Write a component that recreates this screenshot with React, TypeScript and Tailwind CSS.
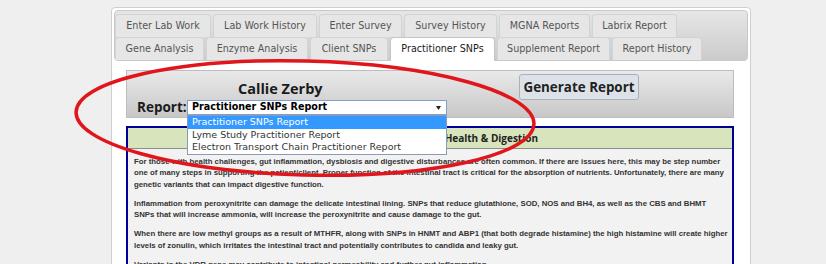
import React from 'react';

// Tab rows of the report page (widths taken from the jQuery UI layout)
const topTabs = [
  { label: 'Enter Lab Work', w: 'w-[96px]' },
  { label: 'Lab Work History', w: 'w-[104px]' },
  { label: 'Enter Survey', w: 'w-[83px]' },
  { label: 'Survey History', w: 'w-[93px]' },
  { label: 'MGNA Reports', w: 'w-[91px]' },
  { label: 'Labrix Report', w: 'w-[85px]' },
];

const bottomTabs = [
  { label: 'Gene Analysis', w: 'w-[89px]', active: false },
  { label: 'Enzyme Analysis', w: 'w-[102px]', active: false },
  { label: 'Client SNPs', w: 'w-[78px]', active: false },
  { label: 'Practitioner SNPs', w: 'w-[105px]', active: true },
  { label: 'Supplement Report', w: 'w-[113px]', active: false },
  { label: 'Report History', w: 'w-[90px]', active: false },
];

const reportOptions = [
  'Practitioner SNPs Report',
  'Lyme Study Practitioner Report',
  'Electron Transport Chain Practitioner Report',
];

function Tab({ label, w, active }: { label: string; w: string; active?: boolean }) {
  return (
    <div
      className={
        active
          ? `${w} relative z-10 flex h-[24px] items-center justify-center rounded-t-[4px] border border-b-0 border-[#c5c5c5] bg-white text-[#212121]`
          : `${w} flex h-[23px] items-center justify-center rounded-t-[4px] border border-b-0 border-[#d3d3d3] bg-[#e6e6e6] text-[#555]`
      }
    >
      {label}
    </div>
  );
}

export default function App() {
  return (
    <div className="relative h-[264px] overflow-hidden bg-[#efefef] pl-[111px] pt-[7px] font-['DejaVu_Sans',sans-serif]">
      {/* Main panel */}
      <div className="h-[400px] w-[640px] rounded-[4px] border border-[#cfcfcf] bg-white p-[2px]">
        {/* Tabs header */}
        <div className="rounded-[4px] border border-[#c9c9c9] bg-linear-to-b from-[#e6e6e6] to-[#cbcbcb] pt-[3px] text-[9.6px]">
          <div className="flex gap-[2px]">
            {topTabs.map(t => (
              <Tab key={t.label} label={t.label} w={t.w} />
            ))}
          </div>
          <div className="flex h-[23px] items-start gap-[2px]">
            {bottomTabs.map(t => (
              <Tab key={t.label} label={t.label} w={t.w} active={t.active} />
            ))}
          </div>
        </div>

        <div className="pl-[12px] pt-[9px]">
          {/* Report chooser */}
          <div className="flex h-[48px] w-[608px] border border-[#bdbdbd] bg-linear-to-b from-[#e9e9e9] to-[#c8c8c8]">
            <div className="flex flex-col pl-[10px]">
              <div className="pl-[101px] pt-[8px] font-['Open_Sans',sans-serif] text-[14.5px] font-bold leading-[20px] text-[#1a1a1a]">
                Callie Zerby
              </div>
              <div className="mt-[1px] flex h-[15px] items-center">
                <span className="w-[50px] font-['Open_Sans',sans-serif] text-[13.5px] font-bold leading-[15px] text-[#1a1a1a]">
                  Report:
                </span>
                <div className="relative h-[15px] w-[260px]">
                  <div className="flex h-[15px] items-center justify-between border border-[#7f9fd0] bg-white pl-[4px] pr-[5px] text-[9.6px] font-bold text-black">
                    <span>Practitioner SNPs Report</span>
                    <svg width="5" height="4" viewBox="0 0 5 4">
                      <path d="M0 0 L5 0 L2.5 4 Z" fill="#222" />
                    </svg>
                  </div>
                  {/* open dropdown list */}
                  <div className="absolute left-0 top-[15px] z-20 w-[260px] border border-[#8a9bb5] bg-white text-[9.5px] text-[#333]">
                    {reportOptions.map((o, i) => (
                      <div
                        key={o}
                        className={
                          i === 0
                            ? 'flex h-[12.5px] items-center bg-[#3399ff] pl-[4px] text-white'
                            : 'flex h-[12.5px] items-center pl-[4px]'
                        }
                      >
                        {o}
                      </div>
                    ))}
                  </div>
                </div>
              </div>
            </div>
            <div className="ml-[72px] pt-[3px]">
              <button className="h-[26px] w-[120px] rounded-[3px] border border-[#a8b0ba] bg-[#dde2e8] font-['Open_Sans',sans-serif] text-[13.4px] font-bold text-[#222]">
                Generate Report
              </button>
            </div>
          </div>

          {/* Report section */}
          <div className="mt-[8px] w-[608px] border-2 border-[#000099] bg-[#f2f2f2]">
            <div className="flex h-[21px] items-center justify-center border-b border-[#8c8c8c] bg-[#d8e4bc] font-['Open_Sans',sans-serif] text-[10px] font-bold text-[#222]">
              Gastrointestinal System Health &amp; Digestion
            </div>
            <div className="px-[6px] pt-[7px] font-['Liberation_Sans',Arial,sans-serif] text-[7.8px] font-bold leading-[11.3px] text-[#333]">
              <p className="mb-[8px] whitespace-nowrap">
                For those with health challenges, gut inflammation, dysbiosis and digestive disturbances are often common. If there are issues here, this may be step number
                <br />
                one of many steps in supporting the patient/client. Proper function of the intestinal tract is critical for the absorption of nutrients. Unfortunately, there are many
                <br />
                genetic variants that can impact digestive function.
              </p>
              <p className="mb-[8px] whitespace-nowrap">
                Inflammation from peroxynitrite can damage the delicate intestinal lining. SNPs that reduce glutathione, SOD, NOS and BH4, as well as the CBS and BHMT
                <br />
                SNPs that will increase ammonia, will increase the peroxynitrite and cause damage to the gut.
              </p>
              <p className="mb-[8px] whitespace-nowrap">
                When there are low methyl groups as a result of MTHFR, along with SNPs in HNMT and ABP1 (that both degrade histamine) the high histamine will create higher
                <br />
                levels of zonulin, which irritates the intestinal tract and potentially contributes to candida and leaky gut.
              </p>
              <p className="whitespace-nowrap">
                Variants in the VDR gene may contribute to intestinal permeability and further gut inflammation.
              </p>
            </div>
          </div>
        </div>
      </div>

      {/* Hand-drawn red annotation circle */}
      <svg className="pointer-events-none absolute left-0 top-0 z-30" width="826" height="264" viewBox="0 0 826 264">
        <ellipse cx="305" cy="118" rx="229" ry="57" fill="none" stroke="#e0161c" strokeWidth="3.5" transform="rotate(1.5 305 118)" />
      </svg>
    </div>
  );
}
